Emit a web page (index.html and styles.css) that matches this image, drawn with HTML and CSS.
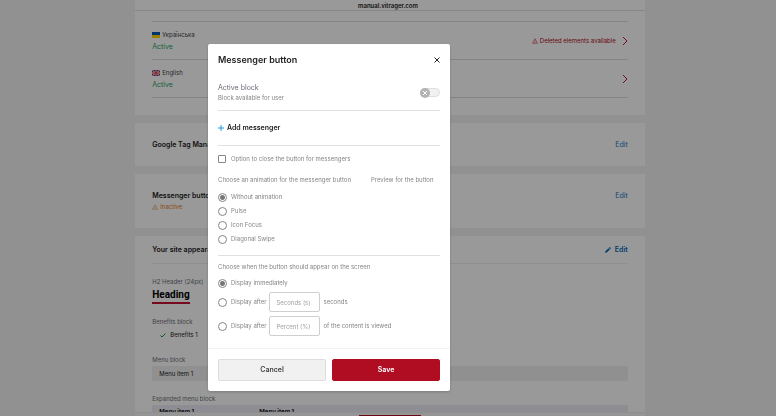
FILE: index.html
```html
<!DOCTYPE html>
<html lang="en">
<head>
    <meta charset="UTF-8">
    <meta name="viewport" content="width=device-width, initial-scale=1.0">
    <title>Messenger button | Site settings</title>
    <link rel="stylesheet" href="styles.css">
</head>
<body>
    <!-- Page -->
    <div class="page">
        <header class="topbar">manual.vitrager.com</header>

        <main class="content">
            <section class="card languages">
                <div class="lang-row lang-row-cut">
                    <svg class="chevron" viewBox="0 0 6 10"><path d="M1 1l4 4-4 4"/></svg>
                </div>
                <div class="lang-row">
                    <div>
                        <div class="lang-name">
                            <svg class="flag" viewBox="0 0 8 6"><path fill="#0057b7" d="M0 0h8v3H0z"/><path fill="#ffd700" d="M0 3h8v3H0z"/></svg>
                            Українська
                        </div>
                        <div class="lang-status">Active</div>
                    </div>
                    <div class="lang-side">
                        <span class="deleted">
                            <svg class="warning" viewBox="0 0 12 12"><path d="M6 1.5L11 10.5H1zM6 5v2.6M6 8.5v1"/></svg>
                            Deleted elements available
                        </span>
                        <svg class="chevron" viewBox="0 0 6 10"><path d="M1 1l4 4-4 4"/></svg>
                    </div>
                </div>
                <div class="lang-row">
                    <div>
                        <div class="lang-name">
                            <svg class="flag" viewBox="0 0 8 6"><path fill="#24357f" d="M0 0h8v6H0z"/><path stroke="#fff" stroke-width="1.2" d="M0 0l8 6M8 0L0 6"/><path stroke="#d0142c" stroke-width=".5" d="M0 0l8 6M8 0L0 6"/><path stroke="#fff" stroke-width="2" d="M4 0v6M0 3h8"/><path stroke="#d0142c" stroke-width="1.2" d="M4 0v6M0 3h8"/></svg>
                            English
                        </div>
                        <div class="lang-status">Active</div>
                    </div>
                    <svg class="chevron" viewBox="0 0 6 10"><path d="M1 1l4 4-4 4"/></svg>
                </div>
            </section>

            <section class="card setting">
                <h2>Google Tag Manager</h2>
                <a class="edit" href="#">Edit</a>
            </section>

            <section class="card setting setting-tall">
                <div>
                    <h2>Messenger button</h2>
                    <div class="inactive">
                        <svg class="warning" viewBox="0 0 12 12"><path d="M6 1.5L11 10.5H1zM6 5v2.6M6 8.5v1"/></svg>
                        Inactive
                    </div>
                </div>
                <a class="edit" href="#">Edit</a>
            </section>

            <section class="card appearance">
                <div class="appearance-head">
                    <h2>Your site appearance</h2>
                    <a class="edit edit-bold" href="#">
                        <svg class="pencil" viewBox="0 0 7 7"><path d="M0 7l.5-2L4 1.4 5.600 3 2 6.500zM4.500 1l1-1L7 1.500l-1 1z"/></svg>
                        Edit
                    </a>
                </div>
                <div class="label">H2 Header (24px)</div>
                <h3 class="heading">Heading</h3>
                <div class="label">Benefits block</div>
                <div class="benefit">
                    <svg class="check" viewBox="0 0 6 5"><path d="M.5 2.500l1.500 1.500L5.500.5"/></svg>
                    Benefits 1
                </div>
                <div class="label">Menu block</div>
                <div class="menu">Menu item 1</div>
                <div class="label">Expanded menu block</div>
                <div class="menu menu-expanded">
                    <span>Menu item 1</span>
                    <span>Menu item 1</span>
                </div>
            </section>
        </main>

        <div class="bottombar"><span class="bottombar-save"></span></div>
    </div>

    <!-- Messenger popup -->
    <div class="overlay">
        <form class="modal" role="dialog" aria-labelledby="modal-title">
            <div class="modal-head">
                <h1 id="modal-title">Messenger button</h1>
                <button class="close" type="button" aria-label="Close">
                    <svg viewBox="0 0 6 6"><path d="M.5.5l5 5M5.500.5l-5 5"/></svg>
                </button>
            </div>

            <div class="modal-body">
                <div class="active-block">
                    <label for="active">
                        <span class="active-title">Active block</span>
                        <span class="active-note">Block available for user</span>
                    </label>
                    <span class="switch">
                        <input type="checkbox" id="active">
                        <svg viewBox="0 0 10 10"><circle cx="5" cy="5" r="5"/><path d="M3 3l4 4M7 3l-4 4"/></svg>
                    </span>
                </div>

                <div class="add-block">
                    <button class="add" type="button">
                        <svg viewBox="0 0 6 6"><path d="M3 0v6M0 3h6"/></svg>
                        Add messenger
                    </button>
                </div>

                <label class="option"><input type="checkbox"> Option to close the button for messengers</label>

                <div class="animation">
                    <fieldset>
                        <legend>Choose an animation for the messenger button</legend>
                        <label class="option"><input type="radio" name="animation" checked> Without animation</label>
                        <label class="option"><input type="radio" name="animation"> Pulse</label>
                        <label class="option"><input type="radio" name="animation"> Icon Focus</label>
                        <label class="option"><input type="radio" name="animation"> Diagonal Swipe</label>
                    </fieldset>
                    <div class="preview">Preview for the button</div>
                </div>

                <fieldset class="appear">
                    <legend>Choose when the button should appear on the screen</legend>
                    <label class="option"><input type="radio" name="appear" checked> Display immediately</label>
                    <div class="delay">
                        <label class="option"><input type="radio" name="appear"> Display after</label>
                        <input class="delay-input" type="text" placeholder="Seconds (s)" aria-label="Seconds">
                        <span>seconds</span>
                    </div>
                    <div class="delay">
                        <label class="option"><input type="radio" name="appear"> Display after</label>
                        <input class="delay-input" type="text" placeholder="Percent (%)" aria-label="Percent">
                        <span>of the content is viewed</span>
                    </div>
                </fieldset>
            </div>

            <div class="modal-foot">
                <button class="btn" type="button">Cancel</button>
                <button class="btn btn-save" type="submit">Save</button>
            </div>
        </form>
    </div>
</body>
</html>
```
FILE: styles.css
```css
* {
    box-sizing: border-box;
}

body {
    margin: 0;
    font-family: 'Inter', sans-serif;
    font-size: 6px;
    line-height: 10px;
    color: #222;
    background-color: #f2f2f2;
}

h1, h2, h3, fieldset, legend {
    margin: 0;
    padding: 0;
    border: none;
}

h2 {
    font-size: 7px;
    line-height: 10px;
    font-weight: 600;
}

svg {
    display: block;
    flex: none;
    fill: none;
}

/* Page */
.page {
    height: 100vh;
    padding-left: 4px;
    overflow: hidden;
    display: flex;
    flex-direction: column;
}

.topbar {
    flex: none;
    width: 66%;
    height: 11px;
    margin: 0 auto;
    padding-top: 1px;
    padding-right: 4px;
    border-bottom: 1px solid #e0e0e0;
    background-color: #fff;
    font-weight: 600;
    text-align: center;
}

.content {
    flex: 1;
    width: 66%;
    min-height: 0;
    margin: 0 auto;
    overflow: hidden;
    display: flex;
    flex-direction: column;
    gap: 8px;
}

.card {
    flex: none;
    padding: 0 17px;
    background-color: #fff;
}

.languages {
    padding-bottom: 17px;
}

.lang-row {
    display: flex;
    justify-content: space-between;
    align-items: center;
    height: 38px;
    border-bottom: 1px solid #dcdcdc;
}

.lang-row-cut {
    height: 11px;
    align-items: flex-start;
    justify-content: flex-end;
}

.lang-row-cut .chevron {
    margin-top: -9px;
}

.lang-name {
    display: flex;
    align-items: center;
    gap: 2px;
    margin-top: 1px;
    color: #444;
}

.lang-status {
    margin-top: 1px;
    font-size: 7px;
    line-height: 12px;
    color: #1fa463;
}

.lang-side {
    display: flex;
    align-items: center;
    gap: 6px;
}

.deleted, .inactive {
    display: flex;
    align-items: center;
    gap: 2px;
    color: #b00d22;
}

.inactive {
    margin-top: 1px;
    color: #e67e22;
}

.flag {
    width: 8px;
    height: 6px;
}

.chevron {
    width: 6px;
    height: 10px;
    stroke: #c4122f;
}

.warning {
    width: 6px;
    height: 6px;
    stroke: currentColor;
}

.setting {
    display: flex;
    justify-content: space-between;
    align-items: center;
    height: 43px;
}

.setting-tall {
    height: 54px;
}

.setting-tall .edit {
    margin-bottom: 10px;
}

.edit {
    display: flex;
    align-items: center;
    gap: 4px;
    font-size: 7px;
    color: #1976c5;
    text-decoration: none;
}

.edit-bold {
    font-weight: 600;
    color: #0068b8;
}

.pencil {
    width: 6px;
    height: 6px;
    fill: currentColor;
}

.appearance {
    height: 220px;
}

.appearance-head {
    display: flex;
    justify-content: space-between;
    align-items: center;
    height: 28px;
    margin-bottom: 13px;
    border-bottom: 1px solid #eee;
}

.label {
    color: #6b7078;
}

.heading {
    width: fit-content;
    margin: 1px 0 13px;
    border-bottom: 2px solid #c4122f;
    font-family: 'Roboto', sans-serif;
    font-size: 10px;
    line-height: 14px;
    color: #000;
}

.benefit {
    display: flex;
    align-items: center;
    gap: 4px;
    margin: 3px 0 15px;
    padding-left: 8px;
}

.check {
    width: 6px;
    height: 5px;
    stroke: #1c8a4c;
}

.menu {
    height: 15px;
    margin: 1px 0 13px;
    padding: 3px 7px;
    border-radius: 2px;
    background-color: #f0f0f0;
}

.menu-expanded {
    display: flex;
    padding-top: 2px;
    background-color: #ebebf5;
    font-weight: 700;
}

.menu-expanded span {
    width: 100px;
}

.bottombar {
    flex: none;
    width: 66%;
    height: 4px;
    margin: 0 auto;
    padding-top: 2px;
    border-top: 1px solid #eee;
    background-color: #f8f8f8;
}

.bottombar-save {
    display: block;
    width: 12%;
    height: 2px;
    margin: 0 auto;
    background-color: #b00d22;
}

/* Popup */
.overlay {
    position: fixed;
    inset: 0;
    display: flex;
    justify-content: center;
    align-items: center;
    padding: 19px 118px 0 0;
    background-color: rgba(0, 0, 0, 0.4);
}

.modal {
    width: 31%;
    min-width: 242px;
    border-radius: 2px;
    background-color: #fff;
    box-shadow: 0 1px 3px rgba(0, 0, 0, 0.2);
    color: #858585;
}

.modal-head, .modal-body {
    padding: 0 10px;
}

.modal-head {
    display: flex;
    justify-content: space-between;
    align-items: center;
    height: 32px;
}

.modal-head h1 {
    font-size: 9px;
    line-height: 12px;
    font-weight: 600;
    color: #222;
}

button {
    font: inherit;
    cursor: pointer;
}

.close {
    padding: 0;
    border: none;
    background: none;
}

.close svg {
    width: 6px;
    height: 6px;
    stroke: #222;
}

.active-block {
    display: flex;
    justify-content: space-between;
    align-items: center;
    height: 35px;
    border-bottom: 1px solid #e0e0e0;
}

.active-title, .active-note {
    display: block;
}

.active-title {
    font-size: 7px;
    color: #666b73;
}

.switch {
    position: relative;
    width: 20px;
    height: 10px;
}

.switch input {
    appearance: none;
    display: block;
    width: 20px;
    height: 9px;
    margin: 0;
    border: 1px solid #dedede;
    border-radius: 5px;
    background-color: #f1f1f1;
}

.switch svg {
    position: absolute;
    top: 0;
    left: 0;
    width: 10px;
    height: 10px;
    fill: #b3b3b3;
    stroke: #fff;
    pointer-events: none;
}

.switch circle {
    stroke: none;
}

.add-block {
    display: flex;
    align-items: center;
    height: 35px;
    border-bottom: 1px solid #e0e0e0;
}

.add {
    display: flex;
    align-items: center;
    gap: 3px;
    padding: 0;
    border: none;
    background: none;
    font-size: 7px;
    font-weight: 600;
    color: #222;
}

.add svg {
    width: 6px;
    height: 6px;
    stroke: #2196e8;
}

.option {
    display: flex;
    align-items: center;
    gap: 4px;
}

.modal-body > .option {
    height: 26px;
}

.option input {
    appearance: none;
    flex: none;
    width: 9px;
    height: 9px;
    margin: 0;
    border: 1px solid #858585;
    border-radius: 50%;
}

.option input[type="checkbox"] {
    width: 8px;
    height: 8px;
    margin-right: 1px;
    border-radius: 1px;
}

.option input[type="radio"]:checked {
    background: radial-gradient(circle, #777 2px, transparent 3px);
}

.animation {
    display: flex;
    gap: 20px;
    padding: 3px 0 9px;
    border-bottom: 1px solid #e0e0e0;
}

.animation legend {
    margin-bottom: 5px;
}

.animation .option {
    height: 14px;
}

.appear {
    margin-top: 6px;
    padding-bottom: 12px;
}

.appear legend {
    margin-bottom: 6px;
}

.delay {
    display: flex;
    align-items: center;
    gap: 3px;
    margin-top: 4px;
}

.delay-input {
    width: 51px;
    height: 20px;
    padding: 0 6px;
    border: 1px solid #cfcfcf;
    border-radius: 2px;
    font: inherit;
}

.delay-input::placeholder {
    color: #a0a0a0;
}

.modal-foot {
    display: flex;
    gap: 6px;
    padding: 10px;
    border-top: 1px solid #f3f3f3;
}

.btn {
    flex: 1;
    height: 22px;
    padding: 0;
    border: 1px solid #ddd;
    border-radius: 2px;
    background-color: #f1f1f1;
    font-size: 7px;
    font-weight: 600;
    color: #444;
}

.btn-save {
    border-color: #b00d22;
    background-color: #b00d22;
    color: #fff;
}
```
